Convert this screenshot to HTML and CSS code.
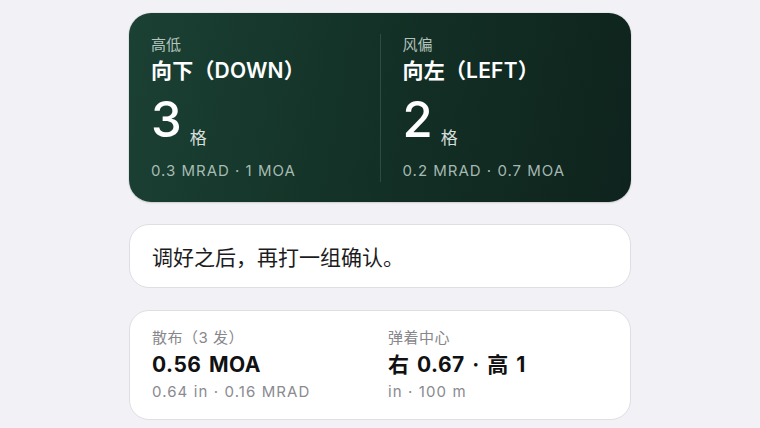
FILE: index.html
```html
<!DOCTYPE html>
<html lang="zh-CN">
<head>
<meta charset="utf-8">
<link rel="stylesheet" href="styles.css">
</head>
<body>
<main class="page">
  <section class="card-dark">
    <div class="col">
      <div class="d-label">高低</div>
      <div class="d-title">向下（DOWN）</div>
      <div class="d-big"><span class="num">3</span><span class="unit">格</span></div>
      <div class="d-sub">0.3 MRAD · 1 MOA</div>
    </div>
    <div class="divider"></div>
    <div class="col">
      <div class="d-label">风偏</div>
      <div class="d-title">向左（LEFT）</div>
      <div class="d-big"><span class="num">2</span><span class="unit">格</span></div>
      <div class="d-sub">0.2 MRAD · 0.7 MOA</div>
    </div>
  </section>

  <section class="card note">调好之后，再打一组确认。</section>

  <section class="card stats">
    <div class="stat">
      <div class="s-label">散布（3 发）</div>
      <div class="s-value">0.56 MOA</div>
      <div class="s-sub">0.64 in · 0.16 MRAD</div>
    </div>
    <div class="stat">
      <div class="s-label">弹着中心</div>
      <div class="s-value">右 0.67 · 高 1</div>
      <div class="s-sub">in · 100 m</div>
    </div>
  </section>
</main>
</body>
</html>
```

FILE: styles.css
```css
html, body {
  margin: 0;
  padding: 0;
  background: #f2f2f6;
  font-family: Inter, "Noto Sans CJK SC", "Noto Sans", sans-serif;
}

.page {
  width: 502px;
  margin: 0 auto;
  padding-top: 13px;
  display: flex;
  flex-direction: column;
  gap: 22px;
}

.card-dark {
  height: 189px;
  box-sizing: border-box;
  border-radius: 22px;
  padding: 22px 22px 21px 22px;
  background: linear-gradient(100deg, #1b4134 0%, #143227 45%, #0e231d 100%);
  box-shadow: 0 0 0 1px rgba(0, 0, 0, 0.04), 0 1px 2px rgba(0, 0, 0, 0.12);
  display: flex;
  gap: 22px;
  color: #fff;
}

.col {
  flex: 1;
  display: flex;
  flex-direction: column;
}

.divider {
  width: 1px;
  background: rgba(255, 255, 255, 0.13);
  margin: -1px 0 -1px 0;
}

.d-label {
  font-size: 15px;
  line-height: 20px;
  color: rgba(224, 236, 230, 0.78);
}

.d-title {
  margin-top: 2px;
  font-size: 21px;
  line-height: 28px;
  font-weight: 600;
  letter-spacing: 0.2px;
  color: #fff;
}

.d-big {
  margin-top: 12px;
  display: flex;
  align-items: flex-end;
  height: 46px;
}

.num {
  font-size: 49px;
  line-height: 46px;
  font-weight: 500;
  letter-spacing: 0;
}

.unit {
  font-size: 17px;
  line-height: 20px;
  margin-left: 8px;
  margin-bottom: -5px;
  color: rgba(235, 242, 238, 0.92);
}

.d-sub {
  margin-top: 18px;
  font-size: 15px;
  line-height: 20px;
  letter-spacing: 1px;
  color: rgba(200, 218, 210, 0.82);
}

.card {
  background: #fff;
  border: 1px solid #dedee3;
  border-radius: 20px;
  box-sizing: border-box;
}

.note {
  height: 64px;
  padding: 0 22px;
  display: flex;
  align-items: center;
  font-size: 21px;
  color: #1c1c1e;
}

.stats {
  height: 110px;
  padding: 17px 22px 0 22px;
  display: grid;
  grid-template-columns: 1fr 1fr;
  column-gap: 16px;
}

.s-label {
  font-size: 15px;
  line-height: 20px;
  letter-spacing: 0.5px;
  color: #86868b;
}

.s-value {
  margin-top: 3px;
  font-size: 21px;
  line-height: 28px;
  font-weight: 700;
  letter-spacing: 0.5px;
  word-spacing: 2px;
  color: #111113;
}

.s-sub {
  margin-top: 3px;
  font-size: 15px;
  line-height: 20px;
  letter-spacing: 1.1px;
  color: #8a8a8f;
}
```
